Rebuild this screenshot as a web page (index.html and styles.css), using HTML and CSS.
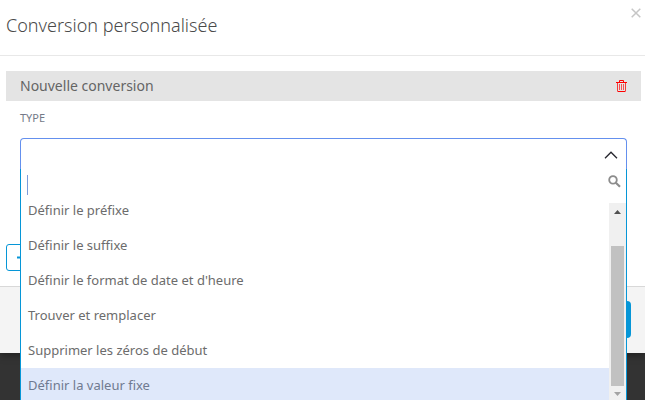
FILE: index.html
```html
<!DOCTYPE html>
<html lang="fr">
<head>
<meta charset="utf-8">
<meta name="viewport" content="width=device-width, initial-scale=1">
<title>Conversion personnalisée</title>
<link rel="stylesheet" href="styles.css">
</head>
<body>
<div class="page">
<main class="modal" role="dialog" aria-labelledby="title">
  <header class="modal-header">
    <h1 class="modal-title" id="title">Conversion personnalisée</h1>
    <button class="icon-button" type="button" aria-label="Fermer">
      <svg width="10" height="10" viewBox="0 0 10 10"><path d="M.7.7l8.6 8.6M9.3.7L.7 9.3" fill="none" stroke="#c6c6c6" stroke-width="1.5"/></svg>
    </button>
  </header>
  <div class="modal-body">
    <section class="conversion">
      <div class="conversion-header">
        <h2 class="conversion-title">Nouvelle conversion</h2>
        <button class="icon-button" type="button" aria-label="Supprimer">
          <svg width="11" height="12" viewBox="0 0 11 12" fill="none" stroke="#f00">
            <path d="M0 2.5h11M3.5 2V.5h4V2M1.5 11.5h8"/>
            <path d="M1.5 3v8M9.5 3v8" stroke-opacity=".75"/>
            <path d="M3.5 4v6M5.5 4v6M7.5 4v6" stroke-opacity=".65"/>
          </svg>
        </button>
      </div>
      <div class="field">
        <label class="field-label" for="type">TYPE</label>
        <div class="combo">
          <button class="combo-toggle" id="type" type="button" aria-expanded="true" aria-controls="types">
            <svg width="14" height="8" viewBox="0 0 14 8"><path d="M1 7.2l6-6 6 6" fill="none" stroke="#26262e" stroke-width="1.3"/></svg>
          </button>
          <div class="combo-panel">
            <div class="search">
              <input class="search-input" type="text" aria-label="Rechercher">
              <svg width="13" height="13" viewBox="0 0 13 13" fill="none" stroke="#8c8c8c"><circle cx="5" cy="4.9" r="3.8" stroke-width="1.8"/><path d="M7.8 7.7l4.2 4" stroke-width="2.2"/></svg>
            </div>
            <div class="list-area">
              <ul class="options" id="types" role="listbox">
                <li class="option" role="option">Définir le préfixe</li>
                <li class="option" role="option">Définir le suffixe</li>
                <li class="option" role="option">Définir le format de date et d'heure</li>
                <li class="option" role="option">Trouver et remplacer</li>
                <li class="option" role="option">Supprimer les zéros de début</li>
                <li class="option option-active" role="option" aria-selected="true">Définir la valeur fixe</li>
              </ul>
              <div class="scrollbar" aria-hidden="true">
                <svg width="7" height="4" viewBox="0 0 7 4"><path d="M0 4l3.5-4L7 4z" fill="#505050"/></svg>
                <div class="thumb"></div>
                <svg width="7" height="4" viewBox="0 0 7 4"><path d="M0 0h7L3.5 4z" fill="#a3a3a3"/></svg>
              </div>
            </div>
          </div>
        </div>
      </div>
    </section>
    <button class="add-button" type="button" aria-label="Ajouter">
      <svg width="10" height="10" viewBox="0 0 10 10"><path d="M0 4.5h10M5 0v10" fill="none" stroke="#0696d7" stroke-width="2"/></svg>
    </button>
  </div>
  <footer class="modal-footer">
    <button class="primary-button" type="button" aria-label="Enregistrer"></button>
  </footer>
</main>
</div>
</body>
</html>
```
FILE: styles.css
```css
* {
  box-sizing: border-box;
}

body {
  margin: 0;
  font-family: "Noto Sans", "Open Sans", sans-serif;
  font-weight: 300;
  color: #4a4a4a;
}

button {
  font: inherit;
  cursor: pointer;
}

svg {
  display: block;
  flex: none;
}

.page {
  height: 100vh;
  overflow: hidden;
  background: #333;
}

.modal {
  background: #fff;
  box-shadow: 0 2px 8px rgba(0, 0, 0, 0.4);
}

.modal-header {
  display: flex;
  justify-content: space-between;
  align-items: flex-start;
  padding: 8px 4px 16px 6px;
  border-bottom: 1px solid #e8e8e8;
}

.modal-title {
  margin: 4px 0 0;
  font-size: 18px;
  line-height: 27px;
  font-weight: 300;
}

.icon-button {
  padding: 0;
  border: 0;
  background: none;
}

.modal-body {
  padding: 15px 4px 15px 6px;
}

.conversion {
  margin-bottom: 74px;
}

.conversion-header {
  display: flex;
  align-items: center;
  justify-content: space-between;
  height: 30px;
  padding: 0 14px;
  background: #e4e4e4;
}

.conversion-title {
  margin: 0;
  font-size: 14px;
  line-height: 30px;
  font-weight: 400;
  color: #646464;
}

.field {
  padding: 8px 14px 0;
}

.field-label {
  display: block;
  margin-bottom: 11px;
  font-size: 11px;
  line-height: 18px;
  font-weight: 400;
  color: #747a88;
}

.combo {
  position: relative;
}

.combo-toggle {
  display: flex;
  align-items: center;
  justify-content: flex-end;
  width: 100%;
  height: 32px;
  padding: 0 8px;
  border: 1px solid #6490ee;
  border-bottom: 0;
  border-radius: 4px 4px 0 0;
  background: #fff;
}

.combo-panel {
  position: absolute;
  top: 31px;
  left: 0;
  right: 0;
  border: 1px solid #0696d7;
  border-top: 0;
  background: #fff;
}

.search {
  display: flex;
  align-items: center;
  height: 34px;
  padding: 0 5px 10px 6px;
}

.search-input {
  flex: 1;
  min-width: 0;
  height: 20px;
  margin-top: 8px;
  padding: 0 4px;
  border: 0;
  border-left: 1px solid #7c9cdc;
  outline: 0;
  font: inherit;
  font-size: 13px;
}

.list-area {
  display: flex;
}

.options {
  flex: 1;
  margin: 0;
  padding: 0;
  list-style: none;
}

.option {
  padding: 10px 7px;
  font-size: 13px;
  line-height: 15px;
  font-weight: 400;
  color: #6c6c6c;
}

.option:first-child {
  padding-top: 0;
}

.option-active {
  background: #dfe8fa;
  color: #6f7a90;
}

.scrollbar {
  display: flex;
  flex-direction: column;
  align-items: center;
  justify-content: space-between;
  width: 17px;
  padding: 7px 2px;
  background: #f0f0f0;
}

.thumb {
  width: 13px;
  height: 140px;
  margin-top: 25px;
  background: #c1c1c1;
}

.add-button {
  display: flex;
  align-items: center;
  width: 96px;
  height: 27px;
  padding: 0 10px;
  border: 1px solid #0696d7;
  border-radius: 3px;
  background: #fff;
}

.modal-footer {
  display: flex;
  justify-content: flex-end;
  padding: 14px 14px 15px;
  border-top: 1px solid #d8d8d8;
  background: #f4f4f4;
}

.primary-button {
  width: 96px;
  height: 37px;
  border: 0;
  border-radius: 4px;
  background: #0696d7;
}
```
